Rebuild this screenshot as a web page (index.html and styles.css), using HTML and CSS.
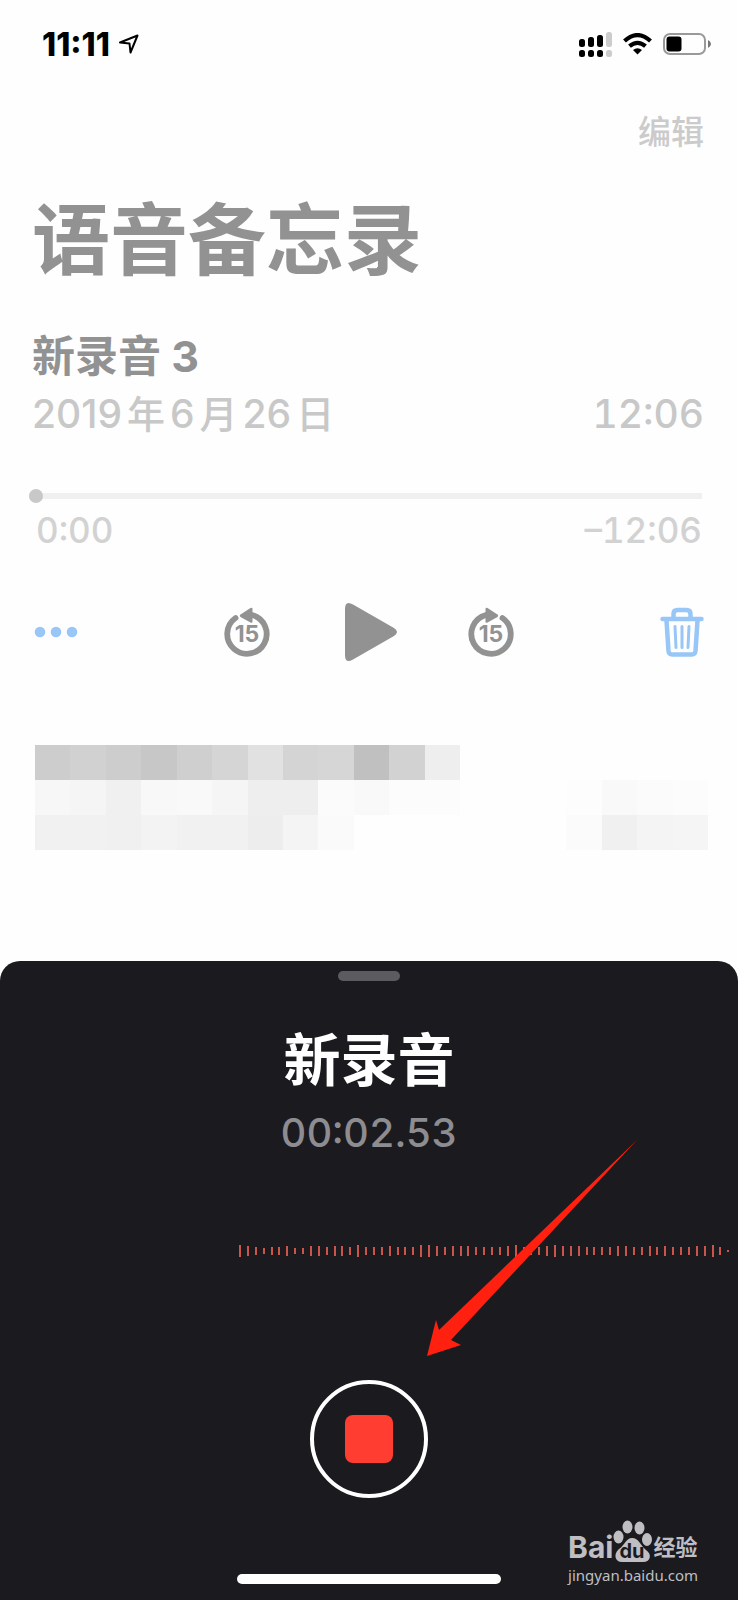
FILE: index.html
```html
<!DOCTYPE html>
<html lang="zh-CN">
<head>
  <meta charset="UTF-8" />
  <meta name="viewport" content="width=device-width, initial-scale=1.0"/>
  <title>语音备忘录</title>
  <link rel="stylesheet" href="styles.css">
</head>
<body>
  <header class="status">
    <div class="clock">
      <span>11:11</span>
      <svg width="20" height="20" viewBox="0 0 20 20" fill="none" stroke="#000" stroke-width="2" stroke-linejoin="round"><path d="M1 8.500L18.500 1.500L11.500 18.500L10.500 9.500Z"/></svg>
    </div>
    <div class="indicators">
      <svg width="33" height="25" viewBox="0 0 33 25">
        <rect x="0" y="7" width="6" height="8" rx="2.500"/><rect x="9" y="5" width="6" height="10" rx="2.500"/><rect x="18" y="3" width="6" height="12" rx="2.500"/>
        <rect x="27" y="0" width="6" height="15" rx="2.500" fill="#ccc"/>
        <rect x="0" y="18" width="6" height="7" rx="2.500"/><rect x="9" y="18" width="6" height="7" rx="2.500"/><rect x="18" y="18" width="6" height="7" rx="2.500"/>
        <rect x="27" y="18" width="6" height="7" rx="2.500" fill="#ccc"/>
      </svg>
      <svg width="29" height="22" viewBox="0 0 29 22" fill="none" stroke="#000" stroke-width="4.200"><path d="M1.500 8Q14.500 -3.800 27.500 8"/><path d="M6.500 13.200Q14.500 6.500 22.500 13.200"/><path d="M10 17Q14.500 13.600 19 17L14.500 21.500Z" fill="#000" stroke="none"/></svg>
      <svg width="48" height="22" viewBox="0 0 48 22"><rect x="1" y="1" width="41" height="20" rx="6" fill="none" stroke="#999" stroke-width="2"/><rect x="3.500" y="3.500" width="15" height="15" rx="3"/><path d="M45 7Q48 8.500 48 11T45 15Z" fill="#777"/></svg>
    </div>
  </header>

  <main class="memos">
    <div class="toolbar"><button class="edit" type="button">编辑</button></div>
    <h1>语音备忘录</h1>

    <section class="memo">
      <h2>新录音 3</h2>
      <div class="meta">
        <time datetime="2019-06-26">2019<span class="unit">年</span>6<span class="unit">月</span>26<span class="unit">日</span></time>
        <span class="length">12:06</span>
      </div>
      <input class="seek" type="range" min="0" max="726" value="0" aria-label="播放进度">
      <div class="times"><span>0:00</span><span>–12:06</span></div>
      <div class="controls">
        <div class="side">
          <button class="blue" type="button" aria-label="更多"><svg width="44" height="12" viewBox="0 0 44 12" fill="currentColor"><circle cx="6" cy="6" r="5.300"/><circle cx="22" cy="6" r="5.300"/><circle cx="38" cy="6" r="5.300"/></svg></button>
        </div>
        <button type="button" aria-label="后退15秒">
          <svg width="46" height="52" viewBox="0 0 46 52">
            <path d="M28 9A19.700 19.700 0 1 1 11.500 12" fill="none" stroke="currentColor" stroke-width="5.800" stroke-linecap="round"/>
            <path d="M16.500 8.500L26.500 2Q28.500 1 28.500 3V15.500Q28.500 17.500 26.500 16.500L16.500 11Q15 9.800 16.500 8.500Z" fill="currentColor"/>
            <text x="23" y="36" text-anchor="middle">15</text>
          </svg>
        </button>
        <button type="button" aria-label="播放"><svg width="58" height="60" viewBox="-4 0 58 60" fill="currentColor"><path d="M1 7Q1 -2 9 2.500L50 26Q56 30 50 34L9 57.500Q1 62 1 53Z"/></svg></button>
        <button type="button" aria-label="前进15秒">
          <svg width="46" height="52" viewBox="0 0 46 52">
            <path d="M18 9A19.700 19.700 0 1 0 34.500 12" fill="none" stroke="currentColor" stroke-width="5.800" stroke-linecap="round"/>
            <path d="M29.500 8.500L19.500 2Q17.500 1 17.500 3V15.500Q17.500 17.500 19.500 16.500L29.500 11Q31 9.800 29.500 8.500Z" fill="currentColor"/>
            <text x="23" y="36" text-anchor="middle">15</text>
          </svg>
        </button>
        <div class="side end">
          <button class="blue" type="button" aria-label="删除">
            <svg width="44" height="50" viewBox="0 0 44 50" fill="none" stroke="currentColor" stroke-linecap="round" stroke-linejoin="round">
              <path d="M2.500 12H41.500M13.500 10.500V7Q13.500 3 17.500 3H26.500Q30.500 3 30.500 7V10.500M6.500 13.500L8.500 44Q9 47.500 12 47.500H32Q35 47.500 35.500 44L37.500 13.500" stroke-width="4.500"/>
              <path d="M15 19.500L16 40.500M22 19.500V40.500M29 19.500L28 40.500" stroke-width="3"/>
            </svg>
          </button>
        </div>
      </div>
    </section>

    <div class="mosaic" id="mosaic" aria-hidden="true"></div>
  </main>

  <section class="sheet">
    <div class="grabber"></div>
    <h2>新录音</h2>
    <p class="timer">00:02.53</p>
    <div class="wave" id="wave"></div>
    <button class="stop" type="button" aria-label="停止录音"><span></span></button>
    <svg class="arrow" width="210" height="216" viewBox="0 0 210 216" fill="#ff2010"><path d="M210 0L24 200L34 205L0 216L9 180L12 190Z"/></svg>

    <footer class="bottom">
      <div class="home"></div>
      <div class="watermark">
        <div class="brand">
          <span>Bai</span>
          <svg width="40" height="44" viewBox="0 0 40 44" fill="currentColor">
            <ellipse cx="5.500" cy="17" rx="5" ry="6.500"/><ellipse cx="14.500" cy="7" rx="5" ry="6.500"/><ellipse cx="26.500" cy="8" rx="5" ry="6.500"/><ellipse cx="34" cy="19.500" rx="5" ry="6.500"/>
            <path d="M19 18C13 18 12 25 6 29C0 34 2 42 9 42H30C38 42 39 34 33 30C27 25 26 18 19 18Z"/>
            <text class="du" x="19" y="38" text-anchor="middle">du</text>
          </svg>
          <span class="jy">经验</span>
        </div>
        <div class="site">jingyan.baidu.com</div>
      </div>
    </footer>
  </section>

  <script>
    // grey levels of the blurred row, 19 cells per line, 0 = empty
    const cells = [
      [205,209,205,199,207,213,225,212,214,192,210,238,0,0,0,0,0,0,0],
      [247,245,240,248,249,245,238,238,251,249,252,252,0,0,0,253,249,251,252],
      [241,241,240,243,241,241,237,244,250,0,0,0,0,0,0,251,240,244,245]
    ];
    const mosaic = document.getElementById("mosaic");
    cells.flat().forEach(v => {
      const cell = document.createElement("i");
      if (v) cell.style.background = `rgb(${v},${v},${v})`;
      mosaic.appendChild(cell);
    });

    const levels = [12,10,8,6,8,8,10,6,6,10,10,8,10,10,8,12,8,8,8,10,8,8,8,12,12,10,8,10,10,10,8,8,8,8,10,12,8,8,8,10,12,10,10,10,8,8,8,8,10,10,8,8,10,8,10,8,8,8,10,10,12,8,2];
    const wave = document.getElementById("wave");
    levels.forEach(h => {
      const bar = document.createElement("i");
      bar.style.height = h + "px";
      wave.appendChild(bar);
    });
  </script>
</body>
</html>
```
FILE: styles.css
```css
* {
  box-sizing: border-box;
}
body {
  margin: 0;
  background: #fefefe;
  color: #929292;
  font-family: Inter, "Noto Sans CJK SC", sans-serif;
}
h1, h2, p {
  margin: 0;
}
button {
  padding: 0;
  border: none;
  background: none;
  color: inherit;
  font-family: inherit;
  cursor: pointer;
}
svg {
  display: block;
}
.status {
  display: flex;
  justify-content: space-between;
  align-items: center;
  height: 88px;
  padding: 0 27px 0 42px;
  color: #000;
}
.clock {
  display: flex;
  align-items: center;
  gap: 9px;
  font-size: 32px;
  font-weight: 800;
}
.indicators {
  display: flex;
  align-items: center;
  gap: 11px;
}
.memos {
  padding: 0 34px 0 32px;
}
.toolbar {
  display: flex;
  justify-content: flex-end;
}
.edit {
  height: 84px;
  color: #cbcbcb;
  font-size: 33px;
  font-weight: 500;
}
h1 {
  font-size: 78px;
  font-weight: 700;
  line-height: 138px;
}
.memo h2 {
  margin-top: 15px;
  font-size: 43px;
  font-weight: 700;
  line-height: 62px;
}
.meta {
  display: flex;
  justify-content: space-between;
  color: #c8c8c8;
  font-size: 39px;
  font-weight: 500;
  line-height: 54px;
}
.length {
  font-variant-numeric: tabular-nums;
}
.unit {
  margin: 0 5px;
  font-size: 38px;
}
.seek {
  display: block;
  width: calc(100% + 1px);
  height: 16px;
  margin: 47px 0 0 -3px;
  appearance: none;
  background: linear-gradient(#f0f0f0, #f0f0f0) center / 100% 6px no-repeat;
}
.seek::-webkit-slider-thumb {
  appearance: none;
  width: 14px;
  height: 14px;
  border-radius: 50%;
  background: #c8c8c8;
}
.times {
  display: flex;
  justify-content: space-between;
  padding: 0 2px 0 4px;
  color: #d2d2d2;
  font-size: 35px;
  font-weight: 500;
  font-variant-numeric: tabular-nums;
  line-height: 52px;
}
.controls {
  display: flex;
  justify-content: space-between;
  align-items: center;
  height: 152px;
  padding-left: 2px;
}
.controls text {
  fill: currentColor;
  font-size: 23px;
  font-weight: 700;
}
.side {
  width: 120px;
}
.end {
  display: flex;
  justify-content: flex-end;
}
.blue {
  color: #98c6f7;
}
.mosaic {
  display: grid;
  grid-template-columns: repeat(19, 1fr);
  grid-auto-rows: 35px;
  margin: 37px -4px 0 3px;
}
.sheet {
  position: relative;
  display: flex;
  flex-direction: column;
  align-items: center;
  margin-top: 111px;
  padding: 10px 0 14px;
  border-radius: 20px 20px 0 0;
  background: #1b1b1f;
}
.grabber {
  width: 62px;
  height: 10px;
  border-radius: 5px;
  background: #5c5c60;
}
.sheet h2 {
  margin-top: 40px;
  color: #fff;
  font-size: 57px;
  font-weight: 700;
  line-height: 80px;
}
.timer {
  margin-top: 8px;
  color: #8d8d91;
  font-size: 40px;
  font-weight: 500;
  font-variant-numeric: tabular-nums;
  line-height: 48px;
}
.wave {
  display: flex;
  justify-content: space-between;
  align-items: center;
  align-self: stretch;
  height: 24px;
  margin: 82px 8px 0 239px;
}
.wave i {
  width: 2px;
  background: #cc5549;
}
.stop {
  display: flex;
  justify-content: center;
  align-items: center;
  width: 118px;
  height: 118px;
  margin-top: 117px;
  border: 4px solid #fff;
  border-radius: 50%;
}
.stop span {
  width: 48px;
  height: 48px;
  border-radius: 8px;
  background: #ff3d30;
}
/* callout drawn over the waveform */
.arrow {
  position: absolute;
  top: 179px;
  left: calc(50% + 58px);
}
.bottom {
  display: grid;
  grid-template-columns: 1fr auto 1fr;
  align-items: end;
  align-self: stretch;
  margin-top: 22px;
}
.home {
  grid-column: 2;
  width: 264px;
  height: 10px;
  margin-bottom: 2px;
  border-radius: 5px;
  background: #fff;
}
.watermark {
  justify-self: end;
  margin-right: 40px;
  color: #bfbfc3;
}
.brand {
  display: flex;
  align-items: flex-end;
  height: 44px;
  font-size: 30px;
  font-weight: 700;
  line-height: 34px;
}
.brand .jy {
  font-size: 22px;
}
.du {
  fill: #1b1b1f;
  font-size: 20px;
  font-weight: 700;
}
.site {
  font-family: "Noto Sans", sans-serif;
  font-size: 15px;
  line-height: 22px;
}
```
